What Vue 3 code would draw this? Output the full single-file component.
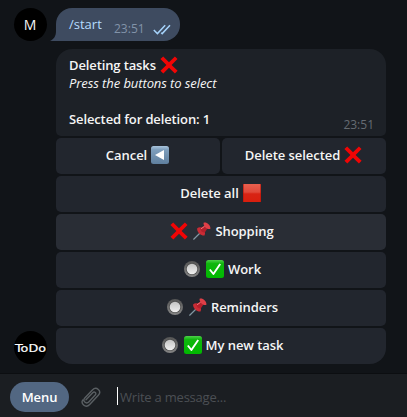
<script setup>
const rows = [
  [{ label: 'Cancel', after: 'back' }, { label: 'Delete selected', after: 'cross' }],
  [{ label: 'Delete all', after: 'square' }],
  [{ before: ['cross', 'pin'], label: 'Shopping', active: true }],
  [{ before: ['radio', 'check'], label: 'Work' }],
  [{ before: ['radio', 'pin'], label: 'Reminders' }],
  [{ before: ['radio', 'check'], label: 'My new task' }],
]
</script>

<template>
  <div class="chat">
    <svg class="defs" width="0" height="0" aria-hidden="true">
      <defs>
        <linearGradient id="blue" x1="0" y1="0" x2="0" y2="1">
          <stop offset="0" stop-color="#a9c4dc" /><stop offset=".2" stop-color="#7f9fbd" /><stop offset="1" stop-color="#5f7f9e" />
        </linearGradient>
        <linearGradient id="red" x1="0" y1="0" x2="0" y2="1">
          <stop offset="0" stop-color="#e8604f" /><stop offset=".45" stop-color="#e0493a" /><stop offset=".55" stop-color="#d82414" /><stop offset="1" stop-color="#d81f0e" />
        </linearGradient>
        <linearGradient id="green" x1="0" y1="0" x2="0" y2="1">
          <stop offset="0" stop-color="#4fd04b" /><stop offset=".2" stop-color="#0fb60d" /><stop offset="1" stop-color="#00b900" />
        </linearGradient>
        <linearGradient id="ring" x1="0" y1="0" x2="0" y2="1">
          <stop offset="0" stop-color="#555" /><stop offset="1" stop-color="#858585" />
        </linearGradient>
        <linearGradient id="knob" x1="0" y1="0" x2="0" y2="1">
          <stop offset="0" stop-color="#c4c4c4" /><stop offset="1" stop-color="#f0f0f0" />
        </linearGradient>
        <symbol id="cross" viewBox="0 0 18 18">
          <path d="M.4 3.1 3.2.5 9 6.3 14.9.4l2.6 2.5-5.9 6 6 5.8-2.7 2.8L9 11.7l-5.7 5.7L.5 14.8 6.4 9z" fill="#f00505" />
        </symbol>
        <symbol id="back" viewBox="0 0 18 18">
          <rect width="18" height="18" rx="2.5" fill="url(#blue)" />
          <path d="M4 9 13 4v10z" fill="#fff" />
        </symbol>
        <symbol id="square" viewBox="0 0 18 18">
          <rect width="18" height="18" rx=".5" fill="url(#red)" />
          <path d="M.5 0v18M17.5 0v18" stroke="#b81408" stroke-width=".6" />
        </symbol>
        <symbol id="check" viewBox="0 0 18 18">
          <rect width="18" height="18" rx="2.5" fill="url(#green)" />
          <path d="M3.8 9.5 7.4 14 14.2 4" fill="none" stroke="#fff" stroke-width="1.9" stroke-linejoin="round" />
        </symbol>
        <symbol id="radio" viewBox="0 0 18 18">
          <circle cx="9" cy="9" r="8" fill="url(#ring)" />
          <circle cx="9" cy="9" r="6" fill="#4e4e4e" />
          <circle cx="9" cy="9" r="5.3" fill="url(#knob)" />
        </symbol>
        <symbol id="pin" viewBox="0 0 18 18">
          <path d="M7.8 10.2.7 17.2" stroke="#8398a3" stroke-width="1.2" stroke-linecap="round" />
          <path d="M4.2 6.2c2-1.3 4.2-1.1 6 .6s2.4 4.3 1.3 6.7c-2 .1-4-.8-5.500-2.300S3.900 8 4.200 6.200z" fill="#c92c35" />
          <path d="M7 6.2 11.3 3.7 14.3 6.7 11.6 10.8 8.5 9.6z" fill="#b41f2b" />
          <path d="M10.6.7c1.7-.5 3.5.1 4.900 1.500s2.300 3.200 1.800 4.800c-1.800.4-3.500-.3-4.800-1.600S10.300 2.400 10.600.7z" fill="#df3f47" />
          <path d="M8.3 6.6 11.2 4.6" stroke="#f0767b" stroke-width="1" stroke-linecap="round" />
        </symbol>
      </defs>
    </svg>

    <main class="history">
      <div class="outgoing">
        <div class="avatar initial">M</div>
        <div class="sent">
          <svg class="tail" width="7" height="16" viewBox="0 0 7 16"><path d="M7 0H6v6C6 11 4 14 0 16h7z" fill="#3e4b60" /></svg>
          <span class="command">/start</span>
          <span class="sent-time">23:51</span>
          <svg class="ticks" width="18" height="11" viewBox="0 0 18 11">
            <path d="M.8 6 4.4 9.6 12.2 1.2M8.2 8.7 9.2 9.6 17 1.2" fill="none" stroke="#a5d2fa" stroke-width="1.5" />
          </svg>
        </div>
      </div>

      <div class="incoming">
        <div class="avatar brand">
          <svg width="33" height="33" viewBox="0 0 33 33"><text class="brand-text" x="1" y="20.500" textLength="31" lengthAdjust="spacingAndGlyphs">ToDo</text></svg>
        </div>
        <div class="card">
          <section class="message">
            <p class="line strong">Deleting tasks<svg class="emoji"><use href="#cross" /></svg></p>
            <p class="line italic"><em>Press the buttons to select</em></p>
            <p class="line strong last">Selected for deletion: 1</p>
            <time class="time">23:51</time>
          </section>
          <div v-for="(row, i) in rows" :key="i" class="row">
            <button v-for="b in row" :key="b.label" class="key" :class="{ active: b.active, led: b.before }">
              <svg v-for="name in b.before" :key="name" class="emoji lead"><use :href="'#' + name" /></svg>
              <span>{{ b.label }}</span>
              <svg v-if="b.after" class="emoji"><use :href="'#' + b.after" /></svg>
            </button>
          </div>
        </div>
      </div>
    </main>

    <footer class="composer">
      <button class="menu">Menu</button>
      <svg class="clip" width="20" height="22" viewBox="0 0 20 22">
        <path d="M5 13.8 11.7 6.7c1.8-1.8 4.3.5 2.5 2.4L8 15.7c-2.9 3-7-.8-4.2-3.8l7.600-8c4-4.200 9.800 1.100 5.900 5.400l-8.600 9.200c-1.700 1.800-4.200 2.200-6.100.5s-1.700-3.700-.9-4.900" fill="none" stroke="#5a5f63" stroke-width="1.4" stroke-linecap="round" />
      </svg>
      <span class="caret"></span>
      <span class="placeholder">Write a message...</span>
    </footer>
  </div>
</template>

<style>
body { margin: 0; background: #111418; }
</style>

<style scoped>
.chat {
  display: flex;
  flex-direction: column;
  box-sizing: border-box;
  width: 407px;
  height: 417px;
  overflow: hidden;
  background: #111418;
  color: #f5f5f5;
  font: 13px/18px "Open Sans", "Noto Sans", sans-serif;
}
.defs { position: absolute; }
.history { flex: 1; padding: 8px 21px 0 14px; }
.outgoing { display: flex; gap: 9px; height: 33px; }
.avatar {
  flex: none;
  width: 33px;
  height: 33px;
  border-radius: 50%;
  background: #000;
}
.initial { font: 14px/33px "Open Sans", sans-serif; text-align: center; text-indent: -1px; }
.brand svg { display: block; }
.brand-text { font: 10.5px "DejaVu Sans", sans-serif; fill: #fff; stroke: #fff; stroke-width: .2px; }
.sent {
  position: relative;
  display: flex;
  box-sizing: border-box;
  width: 124px;
  height: 33px;
  padding-left: 13px;
  border-radius: 16px 16px 16px 0;
  background: #3e4b60;
}
.tail { position: absolute; left: -6px; bottom: 0; }
.command { width: 45px; padding-top: 7px; color: #b5dcff; }
.sent-time { width: 39px; padding-top: 12px; color: #8293a9; font-size: 12px; }
.ticks { margin-top: 16px; }
.incoming { display: flex; align-items: flex-end; gap: 9px; margin-top: 8px; }
.card { width: 330px; }
.message {
  position: relative;
  box-sizing: border-box;
  height: 87px;
  padding: 7px 13px;
  border-radius: 16px 16px 5px 5px;
  background: #1d2127;
}
.line { display: flex; align-items: center; gap: 4px; height: 18px; margin: 0; }
.strong { font-weight: 600; letter-spacing: -.12px; }
.italic { letter-spacing: -.08px; }
.last { margin-top: 18px; }
.time { position: absolute; right: 12px; bottom: 2px; color: #656b72; font-size: 12px; }
.emoji { flex: none; width: 18px; height: 18px; }
.row { display: flex; gap: 2px; margin-top: 2px; }
.key {
  display: flex;
  flex: 1 1 0;
  align-items: center;
  justify-content: center;
  gap: 4px;
  height: 36px;
  padding: 0 1px 2px 0;
  border: 0;
  border-radius: 5px;
  background: #22262e;
  color: #f5f5f5;
  font: 600 13px/18px "Open Sans", sans-serif;
  letter-spacing: -.05px;
  white-space: nowrap;
}
.led { padding: 0 0 2px 2px; }
.lead:first-child { margin-right: 1px; }
.active { background: #292d35; }
.row:last-child .key { border-radius: 5px 5px 16px 16px; }
.composer {
  display: flex;
  align-items: center;
  box-sizing: border-box;
  height: 44px;
  padding: 2px 10px 0;
  border-top: 1px solid #0c0e11;
  background: #1b1e22;
}
.menu {
  width: 59px;
  height: 30px;
  padding: 0;
  border: 0;
  border-radius: 15px;
  background: #526782;
  color: #fff;
  font: 600 13px/30px "Open Sans", sans-serif;
  letter-spacing: -.1px;
}
.clip { margin-left: 12px; }
.caret { width: 1px; height: 18px; margin: -2px 2px 0 16px; background: #fff; }
.placeholder { color: #4b4f54; letter-spacing: -.22px; }
</style>
